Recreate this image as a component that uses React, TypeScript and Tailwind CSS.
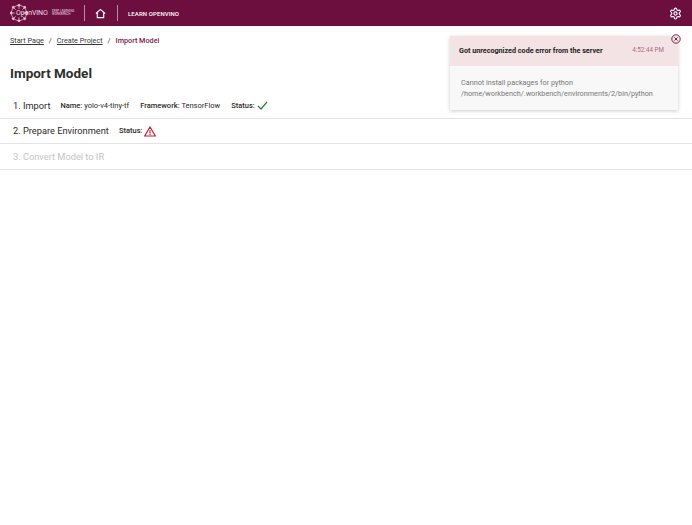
const roboto = "font-['Roboto',sans-serif]";

const Logo = () => (
	<div className="relative flex items-center w-[64px] h-[20px]">
		<svg width="18" height="18" viewBox="0 0 22 22" className="shrink-0" fill="none" stroke="#e6c9d6" strokeWidth="0.9">
			<path d="M11 1 L18 4 L21 11 L18 18 L11 21 L4 18 L1 11 L4 4 Z" />
			<path d="M11 1 L11 6 M18 4 L15 7 M21 11 L16 11 M18 18 L15 15 M11 21 L11 16 M4 18 L7 15 M1 11 L6 11 M4 4 L7 7" />
			<circle cx="11" cy="1.5" r="1.2" fill="#e6c9d6" />
			<circle cx="18" cy="4" r="1.2" fill="#e6c9d6" />
			<circle cx="21" cy="11" r="1.2" fill="#e6c9d6" />
			<circle cx="18" cy="18" r="1.2" fill="#e6c9d6" />
			<circle cx="11" cy="20.5" r="1.2" fill="#e6c9d6" />
			<circle cx="4" cy="18" r="1.2" fill="#e6c9d6" />
			<circle cx="1.5" cy="11" r="1.2" fill="#e6c9d6" />
			<circle cx="4" cy="4" r="1.2" fill="#e6c9d6" />
		</svg>
		<span className="absolute left-[6px] text-[7px] text-[#f0dfe6] tracking-[-0.1px]">OpenVINO</span>
		<div className="absolute left-[42px] text-[3px] leading-[3.5px] text-[#d9b8c8] font-medium whitespace-nowrap">
			<div>DEEP LEARNING</div>
			<div>WORKBENCH</div>
		</div>
	</div>
);

const Label = ({ children }: { children: React.ReactNode }) => (
	<span className="font-medium">{children}</span>
);

const Row = ({ children }: { children: React.ReactNode }) => (
	<div className="flex items-center h-[25.4px] pl-[13px] border-b border-[#e3e3e3] text-[7.5px] text-[#2b2b2b]">
		{children}
	</div>
);

export default function App() {
	return (
		<div className={`relative w-[692px] h-[525px] bg-white overflow-hidden ${roboto}`}>
			<header className="flex items-center h-[26px] bg-[#6d0f3e] text-white">
				<div className="ml-[10px]"><Logo /></div>
				<div className="ml-[10px] w-px h-[16px] bg-[#b98aa2]" />
				<svg width="11" height="11" viewBox="0 0 24 24" fill="none" stroke="white" strokeWidth="2.4" className="ml-[10px]">
					<path d="M2 12 L12 3 L22 12 M5 10 V21 H19 V10" />
				</svg>
				<div className="ml-[11px] w-px h-[16px] bg-[#b98aa2]" />
				<span className="ml-[10px] text-[6px] font-medium tracking-[0.1px]">LEARN OPENVINO</span>
				<svg width="13" height="13" viewBox="0 0 24 24" fill="none" stroke="white" strokeWidth="2" strokeLinecap="round" strokeLinejoin="round" className="ml-auto mr-[10px]">
					<path d="M12.22 2h-.44a2 2 0 0 0-2 2v.18a2 2 0 0 1-1 1.73l-.43.25a2 2 0 0 1-2 0l-.15-.08a2 2 0 0 0-2.73.73l-.22.38a2 2 0 0 0 .73 2.73l.15.1a2 2 0 0 1 1 1.72v.51a2 2 0 0 1-1 1.74l-.15.09a2 2 0 0 0-.73 2.73l.22.38a2 2 0 0 0 2.73.73l.15-.08a2 2 0 0 1 2 0l.43.25a2 2 0 0 1 1 1.73V20a2 2 0 0 0 2 2h.44a2 2 0 0 0 2-2v-.18a2 2 0 0 1 1-1.73l.43-.25a2 2 0 0 1 2 0l.15.08a2 2 0 0 0 2.73-.73l.22-.39a2 2 0 0 0-.73-2.73l-.15-.08a2 2 0 0 1-1-1.74v-.5a2 2 0 0 1 1-1.74l.15-.09a2 2 0 0 0 .73-2.73l-.22-.38a2 2 0 0 0-2.73-.73l-.15.08a2 2 0 0 1-2 0l-.43-.25a2 2 0 0 1-1-1.73V4a2 2 0 0 0-2-2z" />
					<circle cx="12" cy="12" r="3" />
				</svg>
			</header>

			<nav className="flex items-center gap-[4px] ml-[10px] mt-[10px] h-[11px] text-[7.25px] text-[#3a3a3a]">
				<span className="underline">Start Page</span>
				<span className="mx-[1px]">/</span>
				<span className="underline">Create Project</span>
				<span className="mx-[1px]">/</span>
				<span className="font-medium text-[#7d1a4c]">Import Model</span>
			</nav>

			<h1 className="ml-[10px] mt-[17px] text-[13.5px] leading-[18px] font-bold text-[#2e2e2e]">Import Model</h1>

			<div className="mt-[11.5px]">
				<Row>
					<span className="text-[9.25px] mr-[10px]">1. Import</span>
					<span className="mr-[11px]"><Label>Name:</Label> yolo-v4-tiny-tf</span>
					<span className="mr-[11px]"><Label>Framework:</Label> TensorFlow</span>
					<Label>Status:</Label>
					<svg width="11" height="9" viewBox="0 0 11 9" fill="none" stroke="#2f7d3a" strokeWidth="1.2" className="ml-[2px]">
						<path d="M1 5 L4 8 L10 1" />
					</svg>
				</Row>
				<Row>
					<span className="text-[9.25px] mr-[10px]">2. Prepare Environment</span>
					<Label>Status:</Label>
					<svg width="12" height="11" viewBox="0 0 12 11" fill="none" stroke="#c0202f" strokeWidth="1.2" className="ml-[2px]">
						<path d="M6 1 L11.3 10 H0.7 Z M6 4.2 V7.4 M6 8 V9" />
					</svg>
				</Row>
				<Row>
					<span className="text-[9.25px] text-[#c4c4c4]">3. Convert Model to IR</span>
				</Row>
			</div>

			<div className="absolute left-[450px] top-[36px] w-[228px] shadow-[0_1px_4px_rgba(0,0,0,0.2)]">
				<div className="flex items-center justify-between h-[30px] pl-[9px] pr-[14px] bg-[#f4e3e4]">
					<span className="text-[7.2px] font-bold text-[#222]">Got unrecognized code error from the server</span>
					<span className="text-[6.3px] text-[#a56f8a]">4:52:44 PM</span>
				</div>
				<div className="h-[44px] pl-[11px] pt-[11px] bg-[#f8f8f8] text-[7.25px] leading-[11px] text-[#777]">
					<div>Cannot install packages for python</div>
					<div>/home/workbench/.workbench/environments/2/bin/python</div>
				</div>
			</div>

			<svg width="10" height="10" viewBox="0 0 10 10" fill="none" stroke="#6d0f3e" strokeWidth="0.9" className="absolute left-[671px] top-[34px]">
				<circle cx="5" cy="5" r="4.2" />
				<path d="M3.3 3.3 L6.7 6.7 M6.7 3.3 L3.3 6.7" />
			</svg>
		</div>
	);
}
